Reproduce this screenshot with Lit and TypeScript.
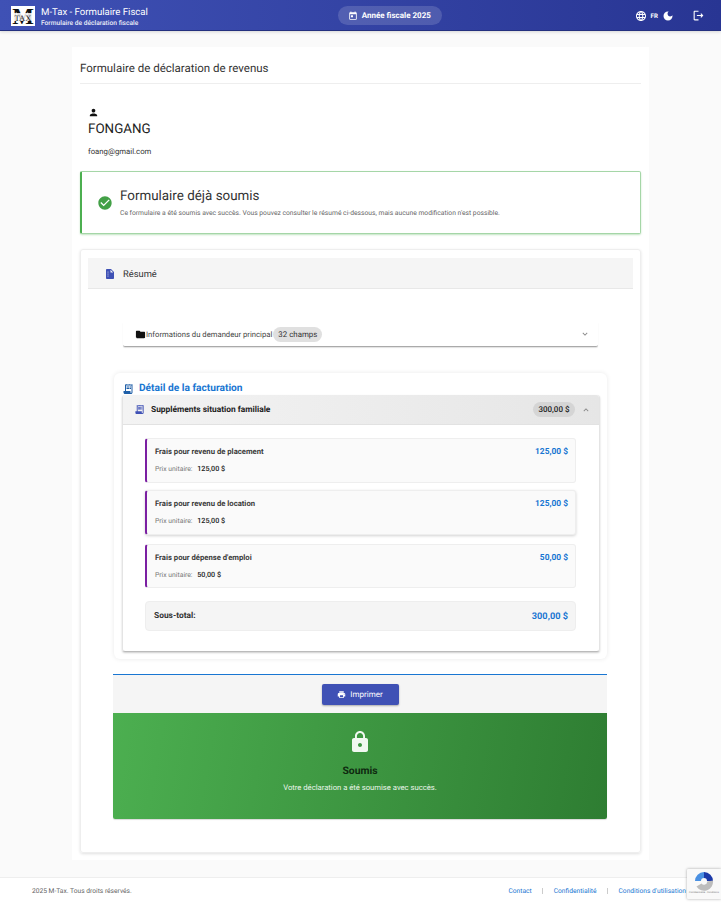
import { LitElement, html, css, svg } from "lit";
import { customElement } from "lit/decorators.js";

const icon = (d: string, size: number, cls = "") => html`<svg class=${cls} width=${size} height=${size} viewBox="0 0 24 24" fill="currentColor"><path d=${d}></path></svg>`;
const P = {
  cal: "M19 3h-1V1h-2v2H8V1H6v2H5c-1.1 0-2 .9-2 2v14c0 1.1.9 2 2 2h14c1.1 0 2-.9 2-2V5c0-1.1-.9-2-2-2zm0 16H5V8h14v11zM7 10h5v5H7z",
  globe: "M11.99 2C6.47 2 2 6.48 2 12s4.47 10 9.99 10C17.52 22 22 17.52 22 12S17.52 2 11.99 2zm6.93 6h-2.95c-.32-1.25-.78-2.45-1.38-3.56 1.84.63 3.37 1.91 4.33 3.56zM12 4.04c.83 1.2 1.48 2.53 1.91 3.96h-3.82c.43-1.43 1.08-2.76 1.91-3.96zM4.26 14C4.1 13.36 4 12.69 4 12s.1-1.36.26-2h3.38c-.08.66-.14 1.32-.14 2s.06 1.34.14 2H4.26zm.82 2h2.95c.32 1.25.78 2.45 1.38 3.56-1.84-.63-3.37-1.9-4.33-3.56zm2.95-8H5.08c.96-1.66 2.49-2.93 4.33-3.56C8.81 5.55 8.35 6.75 8.03 8zM12 19.96c-.83-1.2-1.48-2.53-1.91-3.96h3.82c-.43 1.43-1.08 2.76-1.91 3.96zM14.34 14H9.66c-.09-.66-.16-1.32-.16-2s.07-1.35.16-2h4.68c.09.65.16 1.32.16 2s-.07 1.34-.16 2zm.25 5.56c.6-1.11 1.06-2.31 1.38-3.56h2.95c-.96 1.65-2.49 2.93-4.33 3.56zM16.36 14c.08-.66.14-1.32.14-2s-.06-1.34-.14-2h3.38c.16.64.26 1.31.26 2s-.1 1.36-.26 2h-3.38z",
  moon: "M12 3c-4.97 0-9 4.03-9 9s4.03 9 9 9 9-4.03 9-9c0-.46-.04-.92-.1-1.36-.98 1.37-2.58 2.26-4.4 2.26-2.98 0-5.4-2.42-5.4-5.4 0-1.81.89-3.42 2.26-4.4-.44-.06-.9-.1-1.36-.1z",
  logout: "M17 8l-1.41 1.41L17.17 11H9v2h8.17l-1.58 1.58L17 16l4-4-4-4zM5 5h7V3H5c-1.1 0-2 .9-2 2v14c0 1.1.9 2 2 2h7v-2H5V5z",
  person: "M12 12c2.21 0 4-1.79 4-4s-1.79-4-4-4-4 1.79-4 4 1.79 4 4 4zm0 2c-2.67 0-8 1.34-8 4v2h16v-2c0-2.66-5.33-4-8-4z",
  check: "M12 2C6.48 2 2 6.48 2 12s4.48 10 10 10 10-4.48 10-10S17.52 2 12 2zm-2 15l-5-5 1.41-1.41L10 14.17l7.59-7.59L19 8l-9 9z",
  doc: "M14 2H6c-1.1 0-2 .9-2 2v16c0 1.1.9 2 2 2h12c1.1 0 2-.9 2-2V8l-6-6zM8 17a1 1 0 1 1 0-2 1 1 0 0 1 0 2zm0-4a1 1 0 1 1 0-2 1 1 0 0 1 0 2zm0-4a1 1 0 1 1 0-2 1 1 0 0 1 0 2zm5 0V3.5L18.5 9H13z",
  folder: "M10 4H4c-1.1 0-2 .9-2 2v12c0 1.1.9 2 2 2h16c1.1 0 2-.9 2-2V8c0-1.1-.9-2-2-2h-8l-2-2z",
  down: "M7.41 8.59L12 13.17l4.59-4.58L18 10l-6 6-6-6z",
  up: "M7.41 15.41L12 10.83l4.59 4.58L18 14l-6-6-6 6z",
  receipt: "M19.5 3.5 18 2l-1.5 1.5L15 2l-1.5 1.5L12 2l-1.5 1.5L9 2 7.5 3.5 6 2v14H3v3c0 1.66 1.34 3 3 3h12c1.66 0 3-1.34 3-3V2l-1.5 1.5zM19 19c0 .55-.45 1-1 1s-1-.45-1-1v-3H8V5h11v14zM9 7h6v2H9zM16 7h2v2h-2zM9 10h6v2H9zM16 10h2v2h-2z",
  print: "M19 8H5c-1.66 0-3 1.34-3 3v6h4v4h12v-4h4v-6c0-1.66-1.34-3-3-3zm-3 11H8v-5h8v5zm3-7c-.55 0-1-.45-1-1s.45-1 1-1 1 .45 1 1-.45 1-1 1zm-1-9H6v4h12V3z",
  lock: "M18 8h-1V6c0-2.76-2.24-5-5-5S7 3.24 7 6v2H6c-1.1 0-2 .9-2 2v10c0 1.1.9 2 2 2h12c1.1 0 2-.9 2-2V10c0-1.1-.9-2-2-2zm-6 9c-1.1 0-2-.9-2-2s.9-2 2-2 2 .9 2 2-.9 2-2 2zm3.1-9H8.9V6c0-1.71 1.39-3.1 3.1-3.1 1.71 0 3.1 1.39 3.1 3.1v2z",
};

const items = [
  { name: "Frais pour revenu de placement", unit: "125,00 $", h: 45, top: 0, shadow: false },
  { name: "Frais pour revenu de location", unit: "125,00 $", h: 45, top: 7, shadow: true },
  { name: "Frais pour dépense d'emploi", unit: "50,00 $", h: 44, top: 9, shadow: false },
];

@customElement("app-root")
export class AppRoot extends LitElement {
  static styles = css`
    :host { display: flex; flex-direction: column; min-height: 100vh; height: 905px; overflow: hidden; background: #fafafa; font-family: Roboto, "Liberation Sans", sans-serif; color: rgba(0,0,0,.87); position: relative; text-rendering: geometricPrecision; }
    .hdr { height: 31px; flex: none; box-sizing: border-box; display: flex; justify-content: space-between; align-items: center; padding: 1px 16px 0 11px; color: #fff; background: linear-gradient(90deg, #3f51b5, #283593); border-bottom: 1px solid #24307f; box-shadow: 0 1px 3px rgba(0,0,0,.15); position: relative; }
    .brand { display: flex; align-items: center; gap: 6px; }
    .logo { display: block; flex: none; overflow: visible; }
    .b-text { margin-top: 3px; }
    .b-title { font-size: 9.6px; line-height: 12px; white-space: nowrap; }
    .b-sub { font-size: 6.67px; line-height: 9px; font-weight: 500; opacity: .9; white-space: nowrap; }
    .year { display: flex; align-items: center; gap: 4px; height: 19px; width: 104px; box-sizing: border-box; padding: 0 0 0 10px; margin-left: -3px; border-radius: 10px; background: rgba(255,255,255,.15); font-size: 8px; font-weight: 700; white-space: nowrap; }
    .tools { display: flex; align-items: center; justify-content: flex-end; }
    .fr { font-size: 6.2px; font-weight: 700; margin: 0 4px 0 4px; }
    .logout { margin-left: 18px; display: flex; }
    main { flex: 1; min-height: 0; display: flex; justify-content: center; padding-top: 16px; box-sizing: border-box; }
    .sheet { width: 577px; height: 813px; box-sizing: border-box; background: #fff; padding: 0 8px; }
    h1 { margin: 0; height: 37px; box-sizing: border-box; padding-top: 15px; font-size: 11.5px; line-height: 13px; font-weight: 400; color: #333; white-space: nowrap; border-bottom: 1px solid #eee; }
    .user { height: 87px; box-sizing: border-box; padding: 23px 8px 0; }
    .user svg { display: block; margin-left: 0; color: #111; }
    .name { font-size: 13.4px; line-height: 17px; margin-top: 3px; color: #222; }
    .mail { font-size: 7.75px; line-height: 10px; margin-top: 9px; color: #333; }
    .alert { height: 63px; box-sizing: border-box; border: 1px solid #a5d6a7; border-left: 2px solid #4caf50; border-radius: 2px; background: #fff; display: flex; align-items: center; gap: 7px; padding: 0 0 0 15px; box-shadow: 0 1px 2px rgba(76,175,80,.35); }
    .alert svg { color: #43a047; flex: none; }
    .a-body { padding-top: 1px; }
    .a-title { font-size: 13.4px; line-height: 17px; color: #333; }
    .a-text { font-size: 6.74px; line-height: 9px; color: #666; margin-top: 4px; white-space: nowrap; }
    .card { margin-top: 15px; height: 604px; box-sizing: border-box; border: 1px solid #eee; border-radius: 3px; padding: 8px 7px 0; box-shadow: 0 1px 3px rgba(0,0,0,.12); }
    .card-h { height: 31px; box-sizing: border-box; padding-top: 2px; background: #f5f5f5; border-bottom: 1px solid #e8e8e8; display: flex; align-items: center; gap: 7px; padding-left: 16px; font-size: 9.33px; color: #333; }
    .card-h svg { color: #3f51b5; }
    .info { margin: 33px 35px 0; height: 25px; box-sizing: border-box; display: flex; align-items: center; padding: 0 8px 0 12px; font-size: 7.7px; color: #444; border-bottom: 1px solid #aaa; border-radius: 0 0 2px 2px; box-shadow: 0 1px 1px rgba(0,0,0,.12); }
    .info .fold { color: #111; flex: none; }
    .chip { background: #e0e0e0; border-radius: 8px; height: 15px; display: flex; align-items: center; padding: 0 5px; margin-left: 1px; font-size: 7.9px; color: #333; }
    .grow { flex: 1; }
    .info .chev { color: #888; }
    .bill { margin: 26px 26px 0; width: 493px; height: 286px; box-sizing: border-box; background: #fff; border-radius: 6px; padding: 7px 8px 8px 8px; box-shadow: 0 0 5px rgba(0,0,0,.09); }
    .bill-t { display: flex; align-items: center; gap: 5px; height: 15px; box-sizing: border-box; padding-top: 2px; font-size: 10.2px; font-weight: 700; color: #1976d2; }
    .bill-t svg { color: #1f5fa8; }
    .acc { width: 478px; height: 257px; box-sizing: border-box; border-radius: 3px; border-right: 1px solid #e4e4e4; border-left: 1px solid #e4e4e4; border-bottom: 1px solid #bbb; box-shadow: 0 1px 2px rgba(0,0,0,.2); }
    .acc-h { height: 30px; box-sizing: border-box; background: linear-gradient(90deg, #f3f3f3, #e6e6e6); border-radius: 3px 3px 0 0; display: flex; align-items: center; padding: 0 8px 0 11px; border-bottom: 1px solid #e2e2e2; }
    .acc-h .rc { color: #3f51b5; }
    .acc-t { font-size: 8.4px; font-weight: 700; color: #222; margin-left: 6px; }
    .acc-chip { background: #d5d5d5; border-radius: 8px; height: 15px; display: flex; align-items: center; padding: 0 5.5px; font-size: 8px; font-weight: 500; color: #222; }
    .acc-h .chev { color: #888; margin-left: 6px; }
    .list { padding: 13px 23px 0 22px; display: flex; flex-direction: column; }
    .item { box-sizing: border-box; background: #fafafa; border: 1px solid #eee; border-left: 2px solid #7b1fa2; border-radius: 3px; padding: 7px 7px 0 8px; display: flex; justify-content: space-between; }
    .item.sh { box-shadow: 0 1px 3px rgba(0,0,0,.18); }
    .it-n { font-size: 7.7px; line-height: 11px; font-weight: 700; color: #3a3a3a; }
    .it-u { font-size: 6.8px; line-height: 10px; color: #777; margin-top: 7px; }
    .it-u b { color: #222; font-weight: 500; margin-left: 3px; font-size: 7.2px; }
    .it-p { font-size: 8.4px; line-height: 13px; font-weight: 700; color: #1976d2; }
    .sub { height: 30px; margin-top: 13px; box-sizing: border-box; background: #f5f5f5; border: 1px solid #eee; border-radius: 4px; display: flex; justify-content: space-between; align-items: center; padding: 0 7px 0 8px; font-size: 8.4px; font-weight: 700; color: #333; }
    .sub .v { color: #1976d2; font-size: 9.2px; }
    .actions { margin: 15px 0 0 25px; width: 494px; height: 39px; box-sizing: border-box; background: #f5f5f5; border-top: 1px solid #1976d2; display: flex; justify-content: center; padding-top: 9px; }
    .btn { width: 77px; height: 21px; box-sizing: border-box; background: #3f51b5; color: #fff; border-radius: 2px; display: flex; align-items: center; justify-content: center; gap: 4px; font-size: 8px; box-shadow: 0 1px 2px rgba(0,0,0,.3); }
    .done { margin-left: 25px; width: 494px; height: 106px; box-sizing: border-box; border-radius: 0 0 2px 2px; background: linear-gradient(100deg, #4caf50, #2e7d32); display: flex; flex-direction: column; align-items: center; padding-top: 17px; box-shadow: 0 1px 1px rgba(0,0,0,.15); }
    .done svg { color: #f1f8f1; }
    .done-t { font-size: 10.4px; line-height: 13px; font-weight: 700; color: #0f2a10; margin-top: 10px; }
    .done-s { font-size: 7.67px; line-height: 10px; color: #eaf5ea; margin-top: 6px; }
    footer { flex: none; height: 28px; box-sizing: border-box; padding-bottom: 1px; background: #fff; border-top: 1px solid #eee; display: flex; justify-content: space-between; align-items: center; padding-left: 32px; padding-right: 35px; font-size: 6.67px; color: #666; }
    .links { display: flex; align-items: center; color: #1976d2; }
    .sep { width: 1px; height: 6px; background: #ccc; margin: 0 10.5px; }
    .rc-badge { position: absolute; right: 0; top: 869px; width: 34px; height: 30px; background: #f9f9f9; box-shadow: 0 0 3px rgba(0,0,0,.35); border-radius: 1px 0 0 1px; display: flex; flex-direction: column; align-items: center; }
    .rc-badge svg { margin-top: 2px; }
    .rc-txt { font-size: 2.5px; color: #777; line-height: 3px; white-space: nowrap; }
  `;
  render() {
    return html`
      <div class="hdr">
        <div class="brand">
          <svg class="logo" width="24" height="20" viewBox="0 0 24 20">
            ${svg`<rect width="24" height="20" fill="#fff"></rect>
            <text x="12" y="18" text-anchor="middle" font-size="23" font-weight="700" font-family="Liberation Serif, serif" fill="#111">M</text>
            <rect x="3" y="7" width="18" height="8" fill="#fff" opacity=".85"></rect>
            <text x="12" y="14.5" text-anchor="middle" font-size="8.5" font-family="Liberation Serif, serif" fill="#222">TAX</text>`}
          </svg>
          <div class="b-text"><div class="b-title">M-Tax - Formulaire Fiscal</div><div class="b-sub">Formulaire de déclaration fiscale</div></div>
        </div>
        <div class="year">${icon(P.cal, 10)}<span>Année fiscale 2025</span></div>
        <div class="tools">${icon(P.globe, 12)}<span class="fr">FR</span>${icon(P.moon, 12)}<span class="logout">${icon(P.logout, 13)}</span></div>
      </div>
      <main><div class="sheet">
        <h1>Formulaire de déclaration de revenus</h1>
        <div class="user">${icon(P.person, 11)}<div class="name">FONGANG</div><div class="mail">foang@gmail.com</div></div>
        <div class="alert">${icon(P.check, 16)}<div class="a-body"><div class="a-title">Formulaire déjà soumis</div><div class="a-text">Ce formulaire a été soumis avec succès. Vous pouvez consulter le résumé ci-dessous, mais aucune modification n'est possible.</div></div></div>
        <div class="card">
          <div class="card-h">${icon(P.doc, 12)}<span>Résumé</span></div>
          <div class="info">${icon(P.folder, 11, "fold")}<span>Informations du demandeur principal</span><span class="chip">32 champs</span><span class="grow"></span>${icon(P.down, 10, "chev")}</div>
          <div class="bill">
            <div class="bill-t">${icon(P.receipt, 12)}<span>Détail de la facturation</span></div>
            <div class="acc">
              <div class="acc-h">${icon(P.receipt, 11, "rc")}<span class="acc-t">Suppléments situation familiale</span><span class="grow"></span><span class="acc-chip">300,00 $</span>${icon(P.up, 10, "chev")}</div>
              <div class="list">
                ${items.map((i) => html`<div class="item ${i.shadow ? "sh" : ""}" style="height:${i.h}px;margin-top:${i.top}px"><div><div class="it-n">${i.name}</div><div class="it-u">Prix unitaire: <b>${i.unit}</b></div></div><div class="it-p">${i.unit}</div></div>`)}
                <div class="sub"><span>Sous-total:</span><span class="v">300,00 $</span></div>
              </div>
            </div>
          </div>
          <div class="actions"><div class="btn">${icon(P.print, 9)}<span>Imprimer</span></div></div>
          <div class="done">${icon(P.lock, 24)}<div class="done-t">Soumis</div><div class="done-s">Votre déclaration a été soumise avec succès.</div></div>
        </div>
      </div></main>
      <footer>
        <span>2025 M-Tax. Tous droits réservés.</span>
        <div class="links"><span>Contact</span><span class="sep"></span><span>Confidentialité</span><span class="sep"></span><span>Conditions d'utilisation</span></div>
      </footer>
      <div class="rc-badge">
        <svg width="20" height="20" viewBox="0 0 20 20" fill="none" stroke-width="6">
          ${svg`<path d="M4 10a6 6 0 0 1 6-6" stroke="#4a90e2"></path><path d="M10 4a6 6 0 0 1 6 6" stroke="#1c3aa9"></path><path d="M16 10a6 6 0 0 1-11 4" stroke="#bdbdbd"></path>`}
        </svg>
        <span class="rc-txt">Confidentialité · Conditions</span>
      </div>
    `;
  }
}
